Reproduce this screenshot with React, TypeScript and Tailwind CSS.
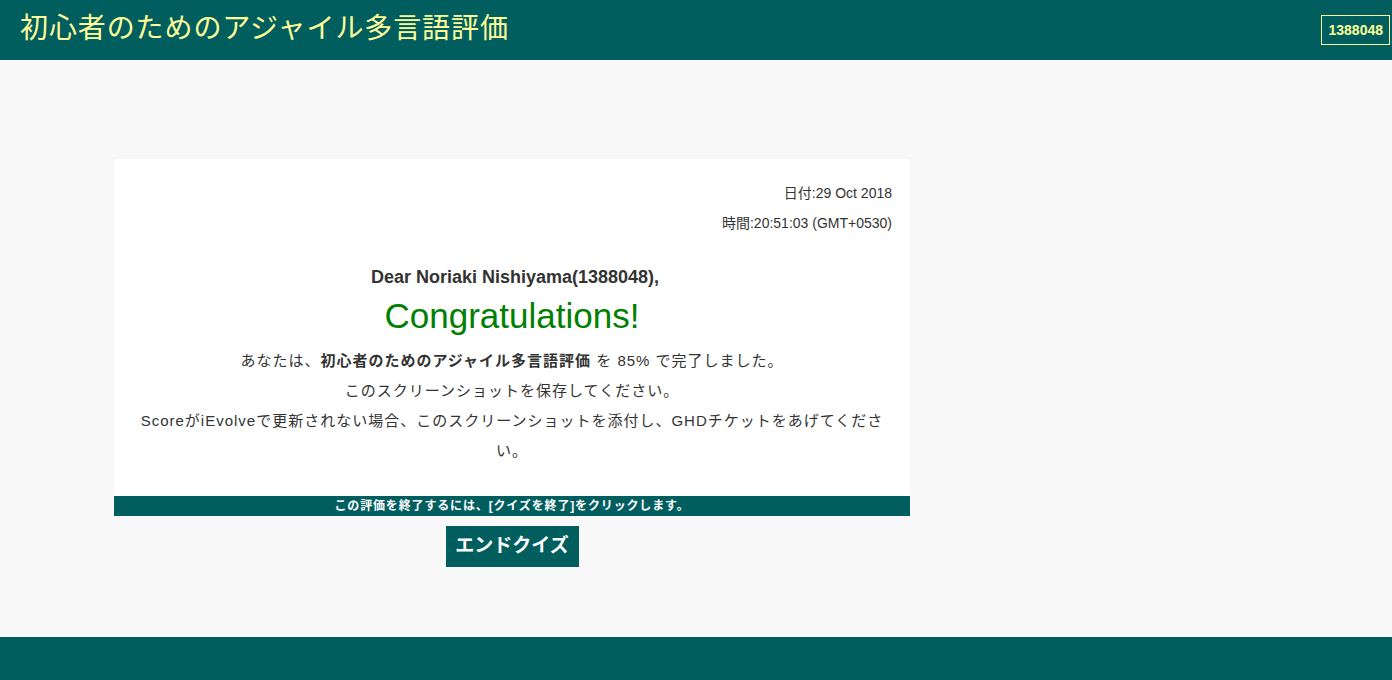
export default function App() {
  const font = { fontFamily: '"Liberation Sans", "Noto Sans CJK JP", sans-serif' };
  return (
    <div className="min-h-screen h-[680px] flex flex-col bg-[#f8f8f8] text-[#333333]" style={font}>
      <header className="h-[60px] shrink-0 bg-[#015e5f] flex items-center justify-between pl-[20px] pr-[2px]">
        <h1 className="text-[28px] leading-none text-[#ffff99] tracking-[0.9px] pb-[2px]">初心者のためのアジャイル多言語評価</h1>
        <div className="border border-[#ffff99] text-[#ffff99] font-bold text-[14px] h-[30px] px-[6px] flex items-center">1388048</div>
      </header>
      <main className="flex-1 pt-[99px] pl-[114px]">
        <div className="w-[796px]">
          <div className="bg-white px-[18px] pt-[19px] pb-[30px]">
            <div className="text-right text-[14px] leading-[30px]">
              <div>日付:29 Oct 2018</div>
              <div>時間:20:51:03 (GMT+0530)</div>
            </div>
            <div className="text-center mt-[27px]">
              <div className="text-[18px] leading-[24px] font-bold pl-[6px]">Dear Noriaki Nishiyama(1388048),</div>
              <div className="text-[35px] leading-[40px] text-[#008000] mt-[7px]">Congratulations!</div>
              <div className="text-[15px] leading-[30px] tracking-[1px] mt-[10px]">
                <div>あなたは、<b>初心者のためのアジャイル多言語評価</b> を 85% で完了しました。</div>
                <div>このスクリーンショットを保存してください。</div>
                <div>ScoreがiEvolveで更新されない場合、このスクリーンショットを添付し、GHDチケットをあげてください。</div>
              </div>
            </div>
          </div>
          <div className="bg-[#015e5f] h-[20px] flex items-center justify-center text-white text-[12px] font-bold tracking-[0.85px]">
            この評価を終了するには、[クイズを終了]をクリックします。
          </div>
          <div className="flex justify-center mt-[10px]">
            <button className="bg-[#015e5f] text-white text-[19px] font-bold h-[41px] w-[133px] flex items-center justify-center">エンドクイズ</button>
          </div>
        </div>
      </main>
      <footer className="h-[43px] shrink-0 bg-[#015e5f]" />
    </div>
  );
}
